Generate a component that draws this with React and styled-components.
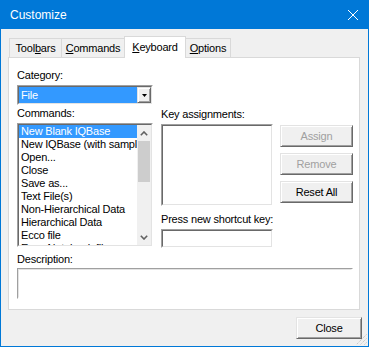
import React from "react";
import styled, { createGlobalStyle } from "styled-components";

const GlobalStyle = createGlobalStyle`
	html, body {
		margin: 0;
		padding: 0;
		background: #f0f0f0;
	}
	body {
		font-family: "Liberation Sans", Arial, sans-serif;
		font-size: 11px;
		letter-spacing: -0.2px;
		color: #000;
	}
`;

const Window = styled.div`
	position: relative;
	width: 369px;
	height: 347px;
	box-sizing: border-box;
	border: 1px solid #0078d7;
	border-top: 0;
	background: #f0f0f0;
	display: flex;
	flex-direction: column;
`;

const TitleBar = styled.div`
	height: 29px;
	flex: none;
	background: #0078d7;
	color: #fff;
	display: flex;
	align-items: center;
	justify-content: space-between;
	padding: 0 10px 0 9px;
	font-size: 12px;
	letter-spacing: 0;
`;

const Client = styled.div`
	flex: 1;
	display: flex;
	flex-direction: column;
	padding: 7px 0 0 7px;
`;

const TabStrip = styled.div`
	height: 21px;
	display: flex;
	align-items: flex-end;
	padding-left: 1px;
`;

const Tab = styled.div`
	position: relative;
	box-sizing: border-box;
	width: ${p => p.w}px;
	height: ${p => (p.active ? 22 : 19)}px;
	margin-bottom: ${p => (p.active ? -1 : 0)}px;
	margin-left: -1px;
	&:first-child {
		margin-left: 0;
	}
	z-index: ${p => (p.active ? 2 : 1)};
	border: 1px solid #d9d9d9;
	border-bottom: 0;
	background: ${p => (p.active ? "#fff" : "#f0f0f0")};
	display: flex;
	align-items: center;
	justify-content: center;
	padding-bottom: ${p => (p.active ? 1 : 0)}px;
	white-space: nowrap;
`;

const Panel = styled.div`
	box-sizing: border-box;
	width: 352px;
	height: 253px;
	border: 1px solid #d9d9d9;
	background: #fff;
	padding: 11px 6px 0 8px;
	display: flex;
	flex-direction: column;
`;

const Label = styled.div`
	line-height: 13px;
	height: 13px;
	margin-top: ${p => p.gap || 0}px;
	padding-top: ${p => p.drop || 0}px;
	white-space: nowrap;
`;

const Sunken = styled.div`
	box-sizing: border-box;
	width: ${p => (p.w ? `${p.w}px` : "auto")};
	height: ${p => p.h}px;
	margin-top: ${p => p.gap || 0}px;
	border: 1px solid;
	border-color: #a0a0a0 #fff #fff #a0a0a0;
	background: #fff;
	flex: none;
`;

const Well = styled.div`
	box-sizing: border-box;
	height: 100%;
	border: 1px solid;
	border-color: ${p =>
		p.flat ? "#e3e3e3 #fff #fff #e3e3e3" : "#696969 #e3e3e3 #e3e3e3 #696969"};
	display: flex;
	overflow: hidden;
`;

const Selected = styled.div`
	flex: 1;
	background: #3399ff;
	color: #fff;
	line-height: 16px;
	padding-left: 2px;
`;

const Raised = styled.div`
	box-sizing: border-box;
	border: 1px solid;
	border-color: #e3e3e3 #696969 #696969 #e3e3e3;
	box-shadow: inset 1px 1px #fff, inset -1px -1px #a0a0a0;
	background: #f0f0f0;
	display: flex;
	align-items: center;
	justify-content: center;
`;

const DropButton = styled(Raised)`
	width: 14px;
	flex: none;
`;

const MainRow = styled.div`
	display: flex;
	margin-top: 2px;
`;

const Column = styled.div`
	width: ${p => p.w}px;
	margin-left: ${p => p.ml || 0}px;
	display: flex;
	flex-direction: column;
`;

const Items = styled.div`
	flex: 1;
	overflow: hidden;
`;

const Item = styled.div`
	line-height: 13px;
	height: 13px;
	padding-left: 2px;
	white-space: nowrap;
	background: ${p => (p.selected ? "#3399ff" : "transparent")};
	color: ${p => (p.selected ? "#fff" : "#000")};
`;

const ScrollBar = styled.div`
	width: 14px;
	flex: none;
	background: #f0f0f0;
	display: flex;
	flex-direction: column;
`;

const Arrow = styled.div`
	height: 16px;
	display: flex;
	align-items: center;
	justify-content: center;
`;

const Thumb = styled.div`
	height: 41px;
	margin: 0 1px;
	background: #cdcdcd;
`;

const Track = styled.div`
	flex: 1;
`;

const Button = styled(Raised)`
	width: ${p => p.w || 73}px;
	height: 22px;
	margin-top: ${p => p.gap || 0}px;
	color: ${p => (p.disabled ? "#a0a0a0" : "#000")};
`;

const Footer = styled.div`
	display: flex;
	justify-content: flex-end;
	padding: 7px 6px 0 0;
`;

const Grip = styled.svg`
	position: absolute;
	right: 1px;
	bottom: 1px;
`;

const commands = [
	"New Blank IQBase",
	"New IQBase (with sample data)",
	"Open...",
	"Close",
	"Save as...",
	"Text File(s)",
	"Non-Hierarchical Data",
	"Hierarchical Data",
	"Ecco file",
	"Ecco Notebook file"
];

const Chevron = ({ up }) => (
	<svg width="8" height="5" viewBox="0 0 8 5">
		<polyline
			points={up ? "0.8,4.2 4,1 7.2,4.2" : "0.8,0.8 4,4 7.2,0.8"}
			fill="none"
			stroke="#606060"
			strokeWidth="1.6"
		/>
	</svg>
);

export default function App() {
	return (
		<>
			<GlobalStyle />
			<Window>
				<TitleBar>
					<span>Customize</span>
					<svg width="10" height="10" viewBox="0 0 10 10">
						<path d="M0 0L10 10M10 0L0 10" stroke="#fff" strokeWidth="1" />
					</svg>
				</TitleBar>
				<Client>
					<TabStrip>
						<Tab w={53}>
							Tool<u>b</u>ars
						</Tab>
						<Tab w={64}>
							<u>C</u>ommands
						</Tab>
						<Tab w={62} active>
							<u>K</u>eyboard
						</Tab>
						<Tab w={46}>
							<u>O</u>ptions
						</Tab>
					</TabStrip>
					<Panel>
						<Label>Category:</Label>
						<Sunken w={136} h={20} gap={3}>
							<Well>
								<Selected>File</Selected>
								<DropButton>
									<svg width="5" height="3" viewBox="0 0 5 3">
										<path d="M0 0H5L2.5 3Z" fill="#000" />
									</svg>
								</DropButton>
							</Well>
						</Sunken>
						<MainRow>
							<Column w={136}>
								<Label>Commands:</Label>
								<Sunken h={124} gap={3}>
									<Well>
										<Items>
											{commands.map((c, i) => (
												<Item key={c} selected={i === 0}>
													{c}
												</Item>
											))}
										</Items>
										<ScrollBar>
											<Arrow>
												<Chevron up />
											</Arrow>
											<Thumb />
											<Track />
											<Arrow>
												<Chevron />
											</Arrow>
										</ScrollBar>
									</Well>
								</Sunken>
							</Column>
							<Column w={112} ml={8}>
								<Label drop={1}>Key assignments:</Label>
								<Sunken h={82} gap={3}>
									<Well />
								</Sunken>
								<Label gap={7}>Press new shortcut key:</Label>
								<Sunken h={19} gap={3}>
									<Well />
								</Sunken>
							</Column>
							<Column w={73} ml={7}>
								<Button gap={18} disabled>
									Assign
								</Button>
								<Button gap={6} disabled>
									Remove
								</Button>
								<Button gap={6}>Reset All</Button>
							</Column>
						</MainRow>
						<Label gap={5}>Description:</Label>
						<Sunken h={31} gap={2}>
							<Well flat />
						</Sunken>
					</Panel>
					<Footer>
						<Button w={66}>Close</Button>
					</Footer>
				</Client>
				<Grip width="12" height="12" viewBox="0 0 12 12">
					<g stroke="#b8b8b8" strokeWidth="1" strokeDasharray="1 1">
						<path d="M11.5 1.5L1.5 11.5" />
						<path d="M11.5 5.5L5.5 11.5" />
						<path d="M11.5 9.5L9.5 11.5" />
					</g>
				</Grip>
			</Window>
		</>
	);
}
